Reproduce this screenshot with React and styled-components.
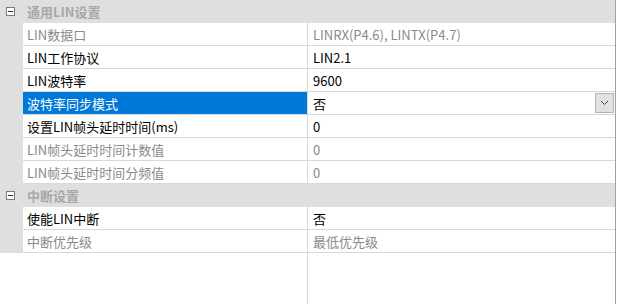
import React from "react";
import styled, { createGlobalStyle } from "styled-components";

const GlobalStyle = createGlobalStyle`
  html, body {
    margin: 0;
    padding: 0;
    background: #fff;
  }
  body {
    font-family: "Microsoft YaHei", "Noto Sans CJK SC", "Noto Sans", sans-serif;
    font-size: 13px;
  }
`;

const Panel = styled.div`
  width: 615px;
  min-height: 100vh;
  border-right: 1px solid #a0a0a0;
  display: flex;
  flex-direction: column;
  background: #fff;
`;

const CategoryRow = styled.div`
  height: 23px;
  display: flex;
  align-items: center;
  background: #dfdfdf;
`;

const Toggle = styled.div`
  width: 23px;
  height: 23px;
  display: flex;
  align-items: center;
  justify-content: center;
  padding-right: 3px;
  box-sizing: border-box;
`;

const CategoryTitle = styled.span`
  padding-left: 4px;
  color: #a8a8a8;
  font-weight: bold;
`;

const Row = styled.div`
  height: 23px;
  display: grid;
  grid-template-columns: 23px 285px 1fr;
`;

const Gutter = styled.div`
  background: #dfdfdf;
`;

const Cell = styled.div`
  display: flex;
  align-items: center;
  padding-left: 4px;
  box-sizing: border-box;
  border-bottom: 1px solid #d9d9d9;
  white-space: nowrap;
  overflow: hidden;
  color: ${(p) => (p.$disabled ? "#8a8a8a" : "#000")};
`;

const LabelCell = styled(Cell)`
  border-right: 1px solid #d9d9d9;
  background: ${(p) => (p.$selected ? "#0078d7" : "#fff")};
  color: ${(p) =>
    p.$selected ? "#fff" : p.$disabled ? "#8a8a8a" : "#000"};
`;

const ValueCell = styled(Cell)`
  position: relative;
  padding-left: 5px;
`;

const DropButton = styled.div`
  position: absolute;
  right: 1px;
  top: 1px;
  width: 19px;
  height: 20px;
  box-sizing: border-box;
  background: #e1e1e1;
  border: 1px solid #b4b4b4;
  display: flex;
  align-items: center;
  justify-content: center;
`;

const Filler = styled.div`
  flex: 1;
  display: grid;
  grid-template-columns: 23px 285px 1fr;
`;

const FillerLabel = styled.div`
  border-right: 1px solid #d9d9d9;
`;

function MinusBox() {
  return (
    <svg width="9" height="9" viewBox="0 0 9 9">
      <rect x="0.5" y="0.5" width="8" height="8" fill="#fff" stroke="#7a7a7a" />
      <line x1="2" y1="4.5" x2="7" y2="4.5" stroke="#333" />
    </svg>
  );
}

function Chevron() {
  return (
    <svg width="9" height="6" viewBox="0 0 9 6">
      <polyline points="1,1 4.5,4.5 8,1" fill="none" stroke="#444" strokeWidth="1" />
    </svg>
  );
}

const groups = [
  {
    title: "通用LIN设置",
    items: [
      { label: "LIN数据口", value: "LINRX(P4.6), LINTX(P4.7)", disabled: true },
      { label: "LIN工作协议", value: "LIN2.1" },
      { label: "LIN波特率", value: "9600" },
      { label: "波特率同步模式", value: "否", selected: true },
      { label: "设置LIN帧头延时时间(ms)", value: "0" },
      { label: "LIN帧头延时时间计数值", value: "0", disabled: true },
      { label: "LIN帧头延时时间分频值", value: "0", disabled: true },
    ],
  },
  {
    title: "中断设置",
    items: [
      { label: "使能LIN中断", value: "否" },
      { label: "中断优先级", value: "最低优先级", disabled: true },
    ],
  },
];

export default function App() {
  return (
    <>
      <GlobalStyle />
      <Panel>
        {groups.map((g) => (
          <React.Fragment key={g.title}>
            <CategoryRow>
              <Toggle>
                <MinusBox />
              </Toggle>
              <CategoryTitle>{g.title}</CategoryTitle>
            </CategoryRow>
            {g.items.map((item) => (
              <Row key={item.label}>
                <Gutter />
                <LabelCell $selected={item.selected} $disabled={item.disabled}>
                  {item.label}
                </LabelCell>
                <ValueCell $disabled={item.disabled}>
                  {item.value}
                  {item.selected && (
                    <DropButton>
                      <Chevron />
                    </DropButton>
                  )}
                </ValueCell>
              </Row>
            ))}
          </React.Fragment>
        ))}
        <Filler>
          <div />
          <FillerLabel />
          <div />
        </Filler>
      </Panel>
    </>
  );
}
